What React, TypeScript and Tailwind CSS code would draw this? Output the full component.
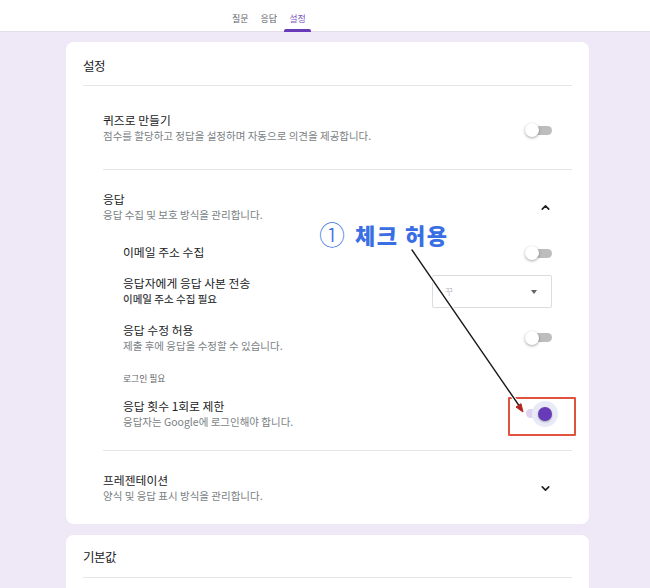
import React from "react";
import { ChevronDown, ChevronUp } from "lucide-react";

const Toggle = ({ on = false, marked = false }: { on?: boolean; marked?: boolean }) => {
  return (
    <div className="relative w-[26px] h-[14px] flex items-center shrink-0">
      <div className={`h-[9px] w-full rounded-full ${on ? "bg-[#ddd2f0]" : "bg-[#bdbdbd]"}`} />
      {on ? (
        <>
          <div className="absolute right-[-6px] top-[-6px] w-[26px] h-[26px] rounded-full bg-[#e8eaf8]" />
          <div className="absolute right-0 top-0 w-[14px] h-[14px] rounded-full bg-[#673ab7] shadow-[0_1px_2px_rgba(0,0,0,0.3)]" />
        </>
      ) : (
        <div className="absolute left-[-1px] top-0 w-[14px] h-[14px] rounded-full bg-white shadow-[0_1px_3px_rgba(0,0,0,0.35)]" />
      )}
      {marked && (
        <div className="absolute left-[-18px] top-[-10px] w-[68px] h-[39px] border-2 border-[#e0533f] rounded-[1px]" />
      )}
    </div>
  );
};

const Item = ({ title, sub, dark = false }: { title: string; sub?: string; dark?: boolean }) => (
  <div className="flex flex-col">
    <span className="text-[11.8px] leading-[16px] text-[#202124]">{title}</span>
    {sub && (
      <span
        className={`mt-[1px] text-[10.5px] leading-[14px] ${
          dark ? "text-[#3c4043] font-medium" : "text-[#7a7f84]"
        }`}
      >
        {sub}
      </span>
    )}
  </div>
);

const App = () => {
  return (
    <div className="relative w-[650px] h-[588px] overflow-hidden bg-[#efe9f7] font-['Noto_Sans_CJK_KR','Noto_Sans',sans-serif]">
      {/* tabs */}
      <div className="h-[32px] bg-white border-b border-[#e2dfe8] flex items-end pl-[227px] gap-[2px]">
        <div className="px-[5px] h-[31px] flex items-center pt-[6px] text-[9px] text-[#5f6368]">질문</div>
        <div className="px-[5px] h-[31px] flex items-center pt-[6px] text-[9px] text-[#5f6368]">응답</div>
        <div className="relative px-[5px] h-[31px] flex items-center pt-[6px] text-[9px] text-[#7e57c2]">
          설정
          <div className="absolute left-0 right-0 bottom-[-1px] h-[3px] rounded-t-[2px] bg-[#673ab7]" />
        </div>
      </div>

      {/* settings card */}
      <div className="ml-[66px] mt-[10px] w-[523px] bg-white rounded-lg px-[17px]">
        <div className="h-[43px] pt-[16px] text-[12.5px] leading-[16px] tracking-[-0.5px] text-[#202124]">설정</div>
        <div className="h-px bg-[#e6e6e6]" />

        <div className="pl-[20px]">
          <div className="h-[83px] pr-[20px] flex items-center justify-between">
            <Item title="퀴즈로 만들기" sub="점수를 할당하고 정답을 설정하며 자동으로 의견을 제공합니다." />
            <div className="mt-[5px]">
              <Toggle />
            </div>
          </div>
          <div className="h-px bg-[#e6e6e6]" />

          <div className="pt-[21px] pb-[21px] pr-[20px]">
            <div className="flex items-center justify-between">
              <Item title="응답" sub="응답 수집 및 보호 방식을 관리합니다." />
              <ChevronUp size={13} strokeWidth={3} className="text-[#202124] mt-[2px]" />
            </div>

            <div className="pl-[20px]">
              <div className="mt-[22px] h-[16px] flex items-center justify-between">
                <span className="text-[11.8px] leading-[16px] text-[#202124]">이메일 주소 수집</span>
                <div className="mt-[2px]">
                  <Toggle />
                </div>
              </div>

              <div className="mt-[15px] h-[33px] flex items-start justify-between">
                <Item title="응답자에게 응답 사본 전송" sub="이메일 주소 수집 필요" dark />
                <div className="w-[120px] h-[33px] border border-[#dadce0] rounded-[2px] flex items-center justify-between pl-[12px] pr-[14px]">
                  <span className="text-[9px] text-[#c4c4c4]">꾸</span>
                  <span className="w-0 h-0 border-l-[3.5px] border-r-[3.5px] border-t-[4px] border-l-transparent border-r-transparent border-t-[#5f6368]" />
                </div>
              </div>

              <div className="mt-[14px] flex items-center justify-between">
                <Item title="응답 수정 허용" sub="제출 후에 응답을 수정할 수 있습니다." />
                <Toggle />
              </div>

              <div className="mt-[19px] text-[8.8px] leading-[14px] text-[#5f6368]">로그인 필요</div>

              <div className="mt-[12px] flex items-center justify-between">
                <Item title="응답 횟수 1회로 제한" sub="응답자는 Google에 로그인해야 합니다." />
                <Toggle on marked />
              </div>
            </div>
          </div>
          <div className="h-px bg-[#e6e6e6]" />

          <div className="pt-[21px] pb-[21px] pr-[20px] flex items-center justify-between">
            <Item title="프레젠테이션" sub="양식 및 응답 표시 방식을 관리합니다." />
            <ChevronDown size={13} strokeWidth={3} className="text-[#202124] mt-[2px]" />
          </div>
        </div>
      </div>

      {/* defaults card */}
      <div className="ml-[66px] mt-[11px] w-[523px] bg-white rounded-lg px-[17px] h-[80px]">
        <div className="h-[42px] pt-[14px] text-[12.5px] leading-[16px] tracking-[-0.5px] text-[#202124]">기본값</div>
        <div className="h-px bg-[#e6e6e6]" />
      </div>

      {/* annotation */}
      <div className="absolute left-[319px] top-[219px] flex items-center gap-[10px] text-[#3a6fe4] whitespace-nowrap">
        <span className="text-[26px] leading-[30px] font-light">①</span>
        <span className="text-[22px] leading-[30px] font-black tracking-[1.5px]">체크 허용</span>
      </div>
      <svg className="absolute left-0 top-0 pointer-events-none" width="650" height="588">
        <line x1="412" y1="250" x2="520" y2="407" stroke="#ffffff" strokeWidth="3.5" strokeLinecap="round" />
        <line x1="412" y1="250" x2="520" y2="407" stroke="#1a1a1a" strokeWidth="1.4" strokeLinecap="round" />
        <polygon points="523,412 521,403.7 516,407.1" fill="#b3261e" stroke="#b3261e" strokeWidth="1" />
      </svg>
    </div>
  );
};

export default App;
